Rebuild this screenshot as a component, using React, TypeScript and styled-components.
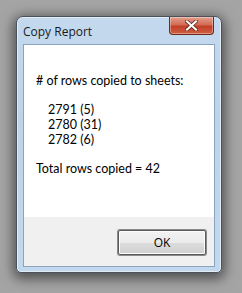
import React from "react";
import styled, { createGlobalStyle } from "styled-components";

const GlobalStyle = createGlobalStyle`
  html, body {
    margin: 0;
    padding: 0;
    background: #a4a4a4;
  }
`;

const Page = styled.div`
  width: 242px;
  height: 293px;
  padding: 16px 0 0 16px;
  box-sizing: border-box;
  background: #a4a4a4;
  font-family: "Open Sans", "Noto Sans", "Liberation Sans", sans-serif;
`;

const Window = styled.div`
  width: 206px;
  height: 257px;
  box-sizing: border-box;
  border: 1px solid #4b525b;
  border-radius: 7px 7px 5px 5px;
  background: linear-gradient(180deg, #c4d9ee 0%, #bcd3ea 40%, #c2d8ee 100%);
  box-shadow: 0 3px 12px 3px rgba(0, 0, 0, 0.5),
    inset 0 0 0 1px rgba(255, 255, 255, 0.55);
  display: flex;
  flex-direction: column;
`;

const TitleBar = styled.div`
  height: 27px;
  display: flex;
  align-items: flex-start;
  justify-content: space-between;
  padding: 0 6px 0 6px;
`;

const Title = styled.span`
  font-size: 12px;
  color: #1a1a1a;
  margin-top: 6px;
`;

const CloseButton = styled.div`
  width: 45px;
  height: 18px;
  margin-right: 1px;
  box-sizing: border-box;
  border: 1px solid #6b2a20;
  border-top: none;
  border-radius: 0 0 4px 4px;
  background: linear-gradient(180deg, #e2a08e 0%, #d46b53 45%, #c1402a 55%, #cf5e3f 100%);
  box-shadow: inset 0 0 0 1px rgba(255, 255, 255, 0.35);
  display: flex;
  align-items: center;
  justify-content: center;
`;

const Client = styled.div`
  margin: 0 6px 5px 6px;
  flex: 1;
  border: 1px solid #8ca3be;
  display: flex;
  flex-direction: column;
`;

const Body = styled.div`
  flex: 1;
  background: #ffffff;
  padding: 28px 0 0 12px;
  color: #000;
  font-family: Lato, "Open Sans", sans-serif;
  font-size: 12.5px;
  line-height: 15px;
`;

const Line = styled.div<{ $indent?: boolean; $gap?: number }>`
  padding-left: ${(p) => (p.$indent ? 12 : 0)}px;
  margin-top: ${(p) => p.$gap ?? 0}px;
  white-space: pre;
`;

const Footer = styled.div`
  height: 49px;
  background: #f0f0f0;
  display: flex;
  justify-content: flex-end;
  padding: 13px 8px 0 0;
  box-sizing: border-box;
`;

const OkButton = styled.button`
  width: 88px;
  height: 25px;
  box-sizing: border-box;
  border: 1px solid #5a5a5a;
  border-radius: 2px;
  background: linear-gradient(180deg, #f2f2f2 0%, #ebebeb 50%, #dddddd 51%, #cfcfcf 100%);
  box-shadow: inset 0 0 0 1px #fcfcfc, 0 0 0 1px #8a8a8a;
  font-family: inherit;
  font-size: 12px;
  color: #000;
  padding: 0;
`;

const rows = [
  { sheet: "2791", count: 5 },
  { sheet: "2780", count: 31 },
  { sheet: "2782", count: 6 },
];

const App = () => {
  const total = rows.reduce((s, r) => s + r.count, 0);
  return (
    <Page>
      <GlobalStyle />
      <Window>
        <TitleBar>
          <Title>Copy Report</Title>
          <CloseButton>
            <svg width="13" height="11" viewBox="0 0 13 11">
              <path
                d="M2 1.5 L11 9.5 M11 1.5 L2 9.5"
                stroke="#5a1a10"
                strokeWidth="3.6"
                strokeLinecap="square"
              />
              <path
                d="M2 1.5 L11 9.5 M11 1.5 L2 9.5"
                stroke="#ffffff"
                strokeWidth="2.2"
                strokeLinecap="square"
              />
            </svg>
          </CloseButton>
        </TitleBar>
        <Client>
          <Body>
            <Line># of rows copied to sheets:</Line>
            {rows.map((r, i) => (
              <Line key={r.sheet} $indent $gap={i === 0 ? 14 : 0}>
                {`${r.sheet} (${r.count})`}
              </Line>
            ))}
            <Line $gap={14}>{`Total rows copied = ${total}`}</Line>
          </Body>
          <Footer>
            <OkButton>OK</OkButton>
          </Footer>
        </Client>
      </Window>
    </Page>
  );
};

export default App;
